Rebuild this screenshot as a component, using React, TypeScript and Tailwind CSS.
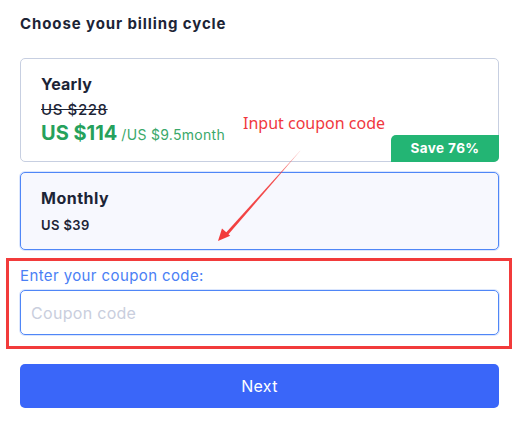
import React from "react";

const font = { fontFamily: "Inter, 'Noto Sans', sans-serif" };

export default function App() {
  return (
    <div
      className="relative w-[529px] h-[429px] bg-white pl-5 pr-[30px] pt-[14px] overflow-hidden"
      style={font}
    >
      <h1 className="text-[15px] leading-5 font-bold tracking-[0.9px] text-[#1c2436]">
        Choose your billing cycle
      </h1>

      {/* yearly */}
      <div className="relative mt-[24px] h-[104px] rounded-[5px] border border-[#c7cfe1] bg-white pl-5 pt-[14px]">
        <div className="text-[16px] leading-[22px] font-bold tracking-[0.2px] text-[#1c2436]">Yearly</div>
        <div className="mt-[5px] text-[15px] leading-5 font-medium tracking-[0.6px] text-[#1c2436] line-through">
          US $228
        </div>
        <div className="flex items-baseline leading-[26px]">
          <span className="text-[20px] font-bold text-[#26a15c]">US $114</span>
          <span className="ml-1 text-[14px] tracking-[0.3px] text-[#3aa86a]">/US $9.5month</span>
        </div>
        <div className="absolute -right-px -bottom-px flex h-[27px] w-[108px] items-center justify-center rounded-tl-[5px] rounded-br-[5px] bg-[#23b574] text-[13.5px] font-bold tracking-[0.4px] text-white">
          Save 76%
        </div>
      </div>

      {/* monthly */}
      <div className="mt-[10px] h-[78px] rounded-[5px] border border-[#4f86f7] bg-[#f7f8fe] pl-5 pt-[14px] shadow-[0_0_0_1px_#dbe6fd]">
        <div className="text-[16px] leading-[22px] font-bold tracking-[0.5px] text-[#1c2436]">Monthly</div>
        <div className="mt-[6px] text-[13px] leading-5 font-semibold tracking-[0.4px] text-[#1c2436]">US $39</div>
      </div>

      {/* coupon */}
      <div className="mt-[16px] text-[15px] leading-5 tracking-[0.4px] text-[#4a80f5]">Enter your coupon code:</div>
      <input
        className="mt-[4px] block h-[45px] w-full rounded-[5px] border border-[#4f86f7] px-[10px] text-[16px] tracking-[0.3px] outline-none shadow-[0_0_0_1px_#dbe6fd] placeholder:text-[#c9cedd]"
        placeholder="Coupon code"
        style={font}
      />

      <button
        className="mt-[29px] block h-[44px] w-full rounded-[5px] bg-[#3a66f9] text-[16px] tracking-[0.3px] text-white"
        style={font}
      >
        Next
      </button>

      {/* annotation overlay */}
      <div className="pointer-events-none absolute left-[6px] top-[258px] h-[91px] w-[506px] border-[3px] border-[#f23b3b]" />
      <div
        className="pointer-events-none absolute left-[243px] top-[112px] text-[16px] leading-[22px] text-[#f0383e]"
        style={{ fontFamily: "'Noto Sans', 'Open Sans', sans-serif" }}
      >
        Input coupon code
      </div>
      <svg className="pointer-events-none absolute left-0 top-0" width="529" height="429">
        <defs>
          <linearGradient id="ar" x1="300" y1="151" x2="218" y2="241" gradientUnits="userSpaceOnUse">
            <stop offset="0" stopColor="#f23b3b" stopOpacity="0.35" />
            <stop offset="0.3" stopColor="#f23b3b" stopOpacity="0.9" />
            <stop offset="1" stopColor="#f23b3b" />
          </linearGradient>
        </defs>
        <polygon
          points="300.6,150.6 299.4,151.4 225.2,233.6 227.4,235.6"
          fill="url(#ar)"
        />
        <polygon points="218,241 222,228.4 230.2,235.8" fill="#f23b3b" />
      </svg>
    </div>
  );
}
